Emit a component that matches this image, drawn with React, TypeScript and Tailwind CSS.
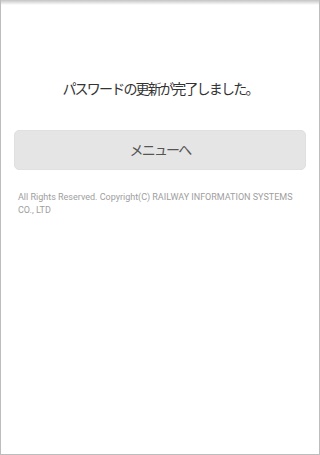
export default function App() {
  return (
    <div className="h-[455px] w-[320px] border-x border-b border-[#bdbdbd] bg-white font-['Roboto','Noto_Sans_CJK_JP',sans-serif]">
      <div className="h-[5px] bg-gradient-to-b from-[#c4c4c4] to-white" />
      <div className="px-[13px]">
        <p className="mt-[74px] text-center text-[14px] leading-[20px] tracking-[-1.8px] text-[#333333]">
          パスワードの更新が完了しました。
        </p>
        <button
          type="button"
          className="mt-[31px] flex h-[40px] w-full items-center justify-center rounded-[5px] border border-[#e0e0e0] bg-[#e5e5e5] text-[14px] tracking-[-1.8px] text-[#555555]"
        >
          メニューへ
        </button>
        <p className="mt-[21px] px-[4px] text-[9px] leading-[13px] text-[#9e9e9e]">
          All Rights Reserved. Copyright(C) RAILWAY INFORMATION SYSTEMS CO., LTD
        </p>
      </div>
    </div>
  );
}
